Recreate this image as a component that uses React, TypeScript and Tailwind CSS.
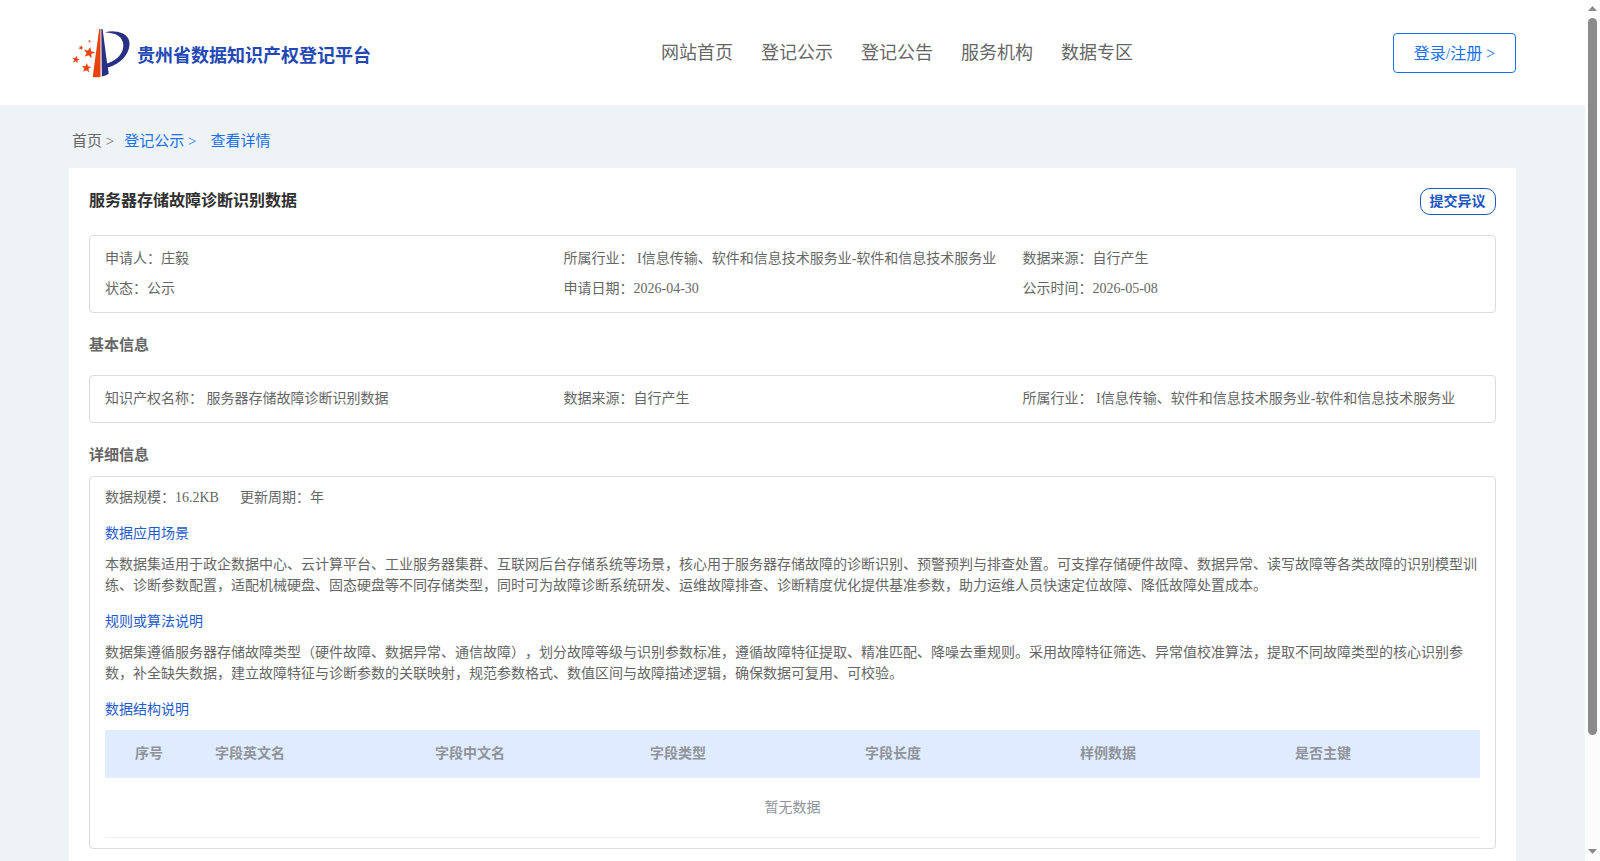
const navItems = ['网站首页', '登记公示', '登记公告', '服务机构', '数据专区']

const summary = [
    '申请人：庄毅',
    '所属行业： I信息传输、软件和信息技术服务业-软件和信息技术服务业',
    '数据来源：自行产生',
    '状态：公示',
    '申请日期：2026-04-30',
    '公示时间：2026-05-08',
]

const basicInfo = [
    '知识产权名称： 服务器存储故障诊断识别数据',
    '数据来源：自行产生',
    '所属行业： I信息传输、软件和信息技术服务业-软件和信息技术服务业',
]

const columns = ['字段英文名', '字段中文名', '字段类型', '字段长度', '样例数据', '是否主键']

const Star = ({ x, y, r, rotate = 0 }: { x: number; y: number; r: number; rotate?: number }) => (
    <polygon
        points="0,-10 2.6,-3.4 9.5,-3.1 4.1,1.3 5.9,8.1 0,4.3 -5.9,8.1 -4.1,1.3 -9.5,-3.1 -2.6,-3.4"
        transform={`translate(${x} ${y}) rotate(${rotate}) scale(${r / 10})`}
        fill="#e8430f"
    />
)

const Logo = () => (
    <svg width="60" height="52" viewBox="0 0 60 52" className="shrink-0">
        <path d="M27.2 1 L28.5 1 L28.5 48.9 Q24.5 49.6 20.7 48.9 Z" fill="#e8430f" />
        <path
            d="M29.3 1 L30.6 1 L35.1 35.5 Q51.6 29.5 51.3 16.5 Q50 4.9 33 4.5 Q37 3.2 42 3.4 C52 3.8 58 8.9 57.5 16.4 C57 27 48 35.8 35.9 39.6 L36.7 45.7 Q34 47.8 29.8 48.5 Z"
            fill="#2a2f86"
        />
        <Star x={17.1} y={24.8} r={6} rotate={12} />
        <Star x={3.9} y={31.7} r={3.9} rotate={10} />
        <Star x={14.5} y={40} r={5} rotate={5} />
        <Star x={9} y={19.8} r={2.6} rotate={20} />
        <Star x={17.5} y={13.2} r={1.6} />
    </svg>
)

const Header = () => (
    <header className="flex h-[105px] shrink-0 items-start justify-between bg-white pr-[69px] pl-[72px]">
        <div className="flex w-[589px] items-center gap-[5px] pt-7">
            <Logo />
            <span className="mt-1 text-[18px] leading-6 font-bold text-[#2348b5]">贵州省数据知识产权登记平台</span>
        </div>
        <nav className="flex flex-1 gap-7 pt-[41px] text-[18px] leading-6 text-[#666]">
            {navItems.map((item) => (
                <a key={item}>{item}</a>
            ))}
        </nav>
        <button className="mt-[33px] h-10 w-[123px] rounded border border-[#1a6ff0] pt-0.5 text-base text-[#1a6ff0]">
            登录/注册 &gt;
        </button>
    </header>
)

const InfoBox = ({ items }: { items: string[] }) => (
    <div className="grid grid-cols-[458.5px_459px_1fr] rounded border border-[#dcdcdc] px-[15px] pt-2 pb-2">
        {items.map((item) => (
            <div key={item} className="h-[30px] leading-[30px] whitespace-nowrap">
                {item}
            </div>
        ))}
    </div>
)

const Section = ({ title, text }: { title: string; text: string }) => (
    <section className="mb-[15px]">
        <h4 className="mb-[10px] leading-[21px] text-[#1f5bcc]">{title}</h4>
        <p className="leading-[21px]">{text}</p>
    </section>
)

const Scrollbar = () => (
    <div className="flex w-[15px] shrink-0 flex-col items-center bg-[#fcfcfc]">
        <svg width="9" height="18" viewBox="0 0 9 18">
            <path d="M4.5 6 L9 11 H0 Z" fill="#8b8b8b" />
        </svg>
        <div className="h-[717px] w-[9px] rounded-full bg-[#8b8b8b]" />
        <div className="flex-1" />
        <svg width="9" height="18" viewBox="0 0 9 18">
            <path d="M0 6 H9 L4.5 11 Z" fill="#8b8b8b" />
        </svg>
    </div>
)

const App = () => {
    return (
        <div className="flex h-[861px] overflow-hidden font-['Liberation_Serif','Noto_Sans_CJK_SC',serif] text-sm text-[#666] [text-spacing-trim:space-all]">
            <div className="flex min-w-0 flex-1 flex-col bg-[#eef3f6]">
                <Header />
                <div className="flex h-[63px] shrink-0 items-center pt-[9px] pl-[72px] text-[15px] leading-5">
                    <span>首页 &gt;</span>
                    <span className="ml-[10px] text-[#1a6ff0]">登记公示 &gt;</span>
                    <span className="ml-[14px] text-[#1a6ff0]">查看详情</span>
                </div>
                <main className="mx-[69px] flex-1 bg-white px-5">
                    <div className="flex h-[67px] items-start justify-between pt-5">
                        <h2 className="pt-px text-base leading-6 font-bold text-[#303030]">
                            服务器存储故障诊断识别数据
                        </h2>
                        <button className="h-[27px] w-[76px] rounded-[10px] border border-[#1d57c2] pr-px font-bold text-[#1d57c2]">
                            提交异议
                        </button>
                    </div>
                    <InfoBox items={summary} />
                    <h3 className="h-[62px] text-[15px] leading-[64px] font-bold">基本信息</h3>
                    <InfoBox items={basicInfo} />
                    <h3 className="h-[53px] text-[15px] leading-[64px] font-bold">详细信息</h3>
                    <div className="h-[373px] rounded border border-[#dcdcdc] px-[15px] pt-[10px]">
                        <div className="mb-[15px] flex gap-[21px] leading-[21px]">
                            <span>数据规模：16.2KB</span>
                            <span>更新周期：年</span>
                        </div>
                        <Section
                            title="数据应用场景"
                            text="本数据集适用于政企数据中心、云计算平台、工业服务器集群、互联网后台存储系统等场景，核心用于服务器存储故障的诊断识别、预警预判与排查处置。可支撑存储硬件故障、数据异常、读写故障等各类故障的识别模型训练、诊断参数配置，适配机械硬盘、固态硬盘等不同存储类型，同时可为故障诊断系统研发、运维故障排查、诊断精度优化提供基准参数，助力运维人员快速定位故障、降低故障处置成本。"
                        />
                        <Section
                            title="规则或算法说明"
                            text="数据集遵循服务器存储故障类型（硬件故障、数据异常、通信故障），划分故障等级与识别参数标准，遵循故障特征提取、精准匹配、降噪去重规则。采用故障特征筛选、异常值校准算法，提取不同故障类型的核心识别参数，补全缺失数据，建立故障特征与诊断参数的关联映射，规范参数格式、数值区间与故障描述逻辑，确保数据可复用、可校验。"
                        />
                        <h4 className="mb-[10px] leading-[21px] text-[#1f5bcc]">数据结构说明</h4>
                        <div className="grid h-12 grid-cols-[100px_220px_215px_215px_215px_215px_195px] items-center border-b border-[#ebeef5] bg-[#dfecff] font-bold text-[#909399]">
                            <span className="pl-[30px]">序号</span>
                            {columns.map((col) => (
                                <span key={col} className="pl-[10px]">
                                    {col}
                                </span>
                            ))}
                        </div>
                        <div className="h-[60px] border-b border-[#ebeef5] text-center leading-[59px] text-[#909399]">
                            暂无数据
                        </div>
                    </div>
                </main>
            </div>
            <Scrollbar />
        </div>
    )
}

export default App
